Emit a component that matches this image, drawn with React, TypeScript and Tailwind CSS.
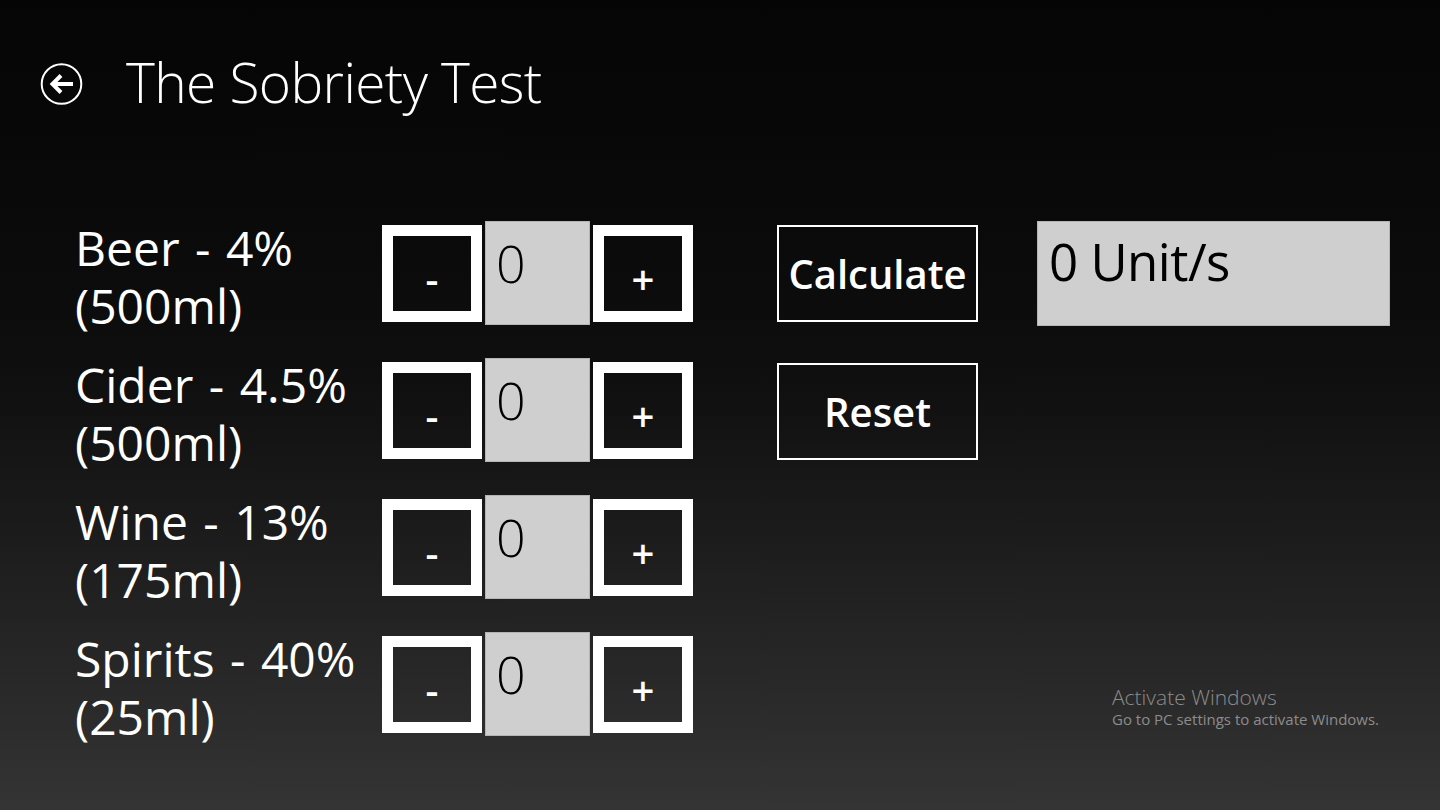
import { useState } from 'react'

const drinks = [
  { name: 'Beer - 4%', size: '(500ml)' },
  { name: 'Cider - 4.5%', size: '(500ml)' },
  { name: 'Wine - 13%', size: '(175ml)' },
  { name: 'Spirits - 40%', size: '(25ml)' },
]

function BackIcon() {
  return (
    <svg width="44" height="44" viewBox="0 0 44 44" fill="none">
      <circle cx="21.5" cy="22" r="19.8" stroke="white" strokeWidth="2" />
      <path d="M33 22H13" stroke="white" strokeWidth="4" />
      <path d="M21 13.5L12.5 22L21 30.5" stroke="white" strokeWidth="4" />
    </svg>
  )
}

function Stepper({ value }: { value: number }) {
  return (
    <div className="flex items-center gap-[3px]">
      <button className="flex h-[97px] w-[100px] items-center justify-center border-[11px] border-white bg-transparent pt-[12px] text-[40px] font-semibold leading-none text-white">
        -
      </button>
      <div className="h-[104px] w-[105px] border border-[#b5b5b5] bg-[#cfcfcf] pl-[10px] pt-[15px] text-[52px] font-light leading-none text-black">
        {value}
      </div>
      <button className="flex h-[97px] w-[100px] items-center justify-center border-[11px] border-white bg-transparent pt-[12px] text-[40px] font-semibold leading-none text-white">
        +
      </button>
    </div>
  )
}

export default function App() {
  const [counts] = useState([0, 0, 0, 0])

  return (
    <div
      className="relative h-[810px] w-full overflow-hidden bg-gradient-to-b from-[#050505] via-[#0e0e0e] via-45% to-[#343434] text-white"
      style={{ fontFamily: '"Open Sans", "Noto Sans", sans-serif' }}
    >
      {/* header */}
      <div className="flex h-[109px] items-start pl-[40px] pt-[62px]">
        <BackIcon />
        <h1 className="ml-[42px] -mt-[8px] text-[55px] font-light leading-none tracking-[-0.6px] text-white">
          The Sobriety Test
        </h1>
      </div>

      <div className="mt-[112px] flex pl-[75px]">
        {/* drink rows */}
        <div className="flex flex-col gap-[33px]">
          {drinks.map((d, i) => (
            <div key={d.name} className="flex h-[104px] items-center">
              <div className="-mt-[2px] w-[307px] self-start text-[48px] leading-[58px] [word-spacing:3px]">
                <div className="whitespace-nowrap">{d.name}</div>
                <div>{d.size}</div>
              </div>
              <Stepper value={counts[i]} />
            </div>
          ))}
        </div>

        {/* actions */}
        <div className="ml-[84px] mt-[4px] flex flex-col gap-[41px]">
          <button className="h-[97px] w-[201px] border-2 border-white text-[40px] font-semibold text-white">
            Calculate
          </button>
          <button className="h-[97px] w-[201px] border-2 border-white text-[40px] font-semibold text-white">
            Reset
          </button>
        </div>

        {/* result */}
        <div className="ml-[59px] h-[105px] w-[353px] border border-[#b5b5b5] bg-[#cfcfcf] pl-[11px] pt-[14px] text-[51px] leading-none tracking-[-0.5px] text-black">
          0 Unit/s
        </div>
      </div>

      {/* watermark */}
      <div className="absolute left-[1112px] top-[685px] text-[#8c8c8c]">
        <div className="text-[21px] font-light leading-[25px]">Activate Windows</div>
        <div className="text-[15px] leading-[19px]">Go to PC settings to activate Windows.</div>
      </div>
    </div>
  )
}
